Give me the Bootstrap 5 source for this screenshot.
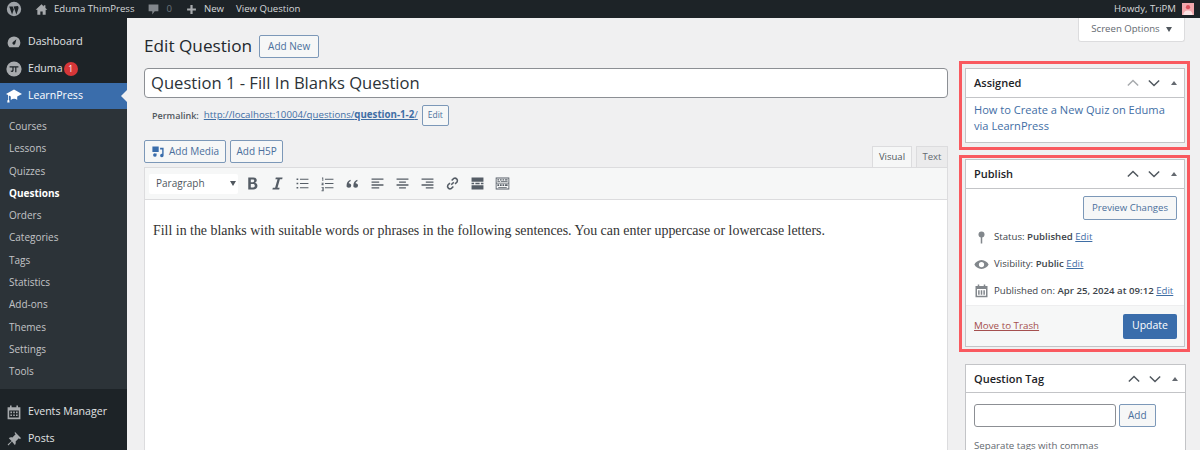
<!DOCTYPE html>
<html lang="en"><head><meta charset="utf-8"><title>Edit Question</title>
<link href="https://cdn.jsdelivr.net/npm/bootstrap@5.3.0/dist/css/bootstrap.min.css" rel="stylesheet">
<style>
html,body{height:450px;overflow:hidden}
body{font-family:"Open Sans","Noto Sans",sans-serif;font-size:10.5px;background:#f0f0f1;color:#3c434a}
a{color:#3f6ea5}
.adminbar{height:18px;background:#1d2327;color:#d5d8da;font-size:9.6px;line-height:18px;padding:0 6px}
.adminbar svg{display:block;flex:none}
.barhome{margin-left:13px}
.barsite{margin-left:6px}
.barcomment{margin-left:14px}
.barcount{margin-left:7px}
.barplus{margin-left:14px}
.barnew{margin-left:7px}
.barview{margin-left:12px}
.baravatar{margin-left:6px}
.shell{height:432px;overflow:hidden}
.sidemenu{width:127px;background:#1d2327;color:#e0e2e4;font-size:10.6px;flex:none}
.sideitem{height:27px;padding-left:6px;gap:6px}
.sideitem svg{width:16px;height:16px;flex:none;fill:#a7aaad}
.sideitem.first{margin-top:10px}
.sideitem.tall{height:28px}
.sideitem.current{background:#3a6dab;color:#fff;height:26px;position:relative}
.sideitem.current svg{fill:#fff}
.sideitem.current::after{content:"";position:absolute;right:0;top:7px;border:6px solid transparent;border-right-color:#f0f0f1;border-left:0}
.bubble{width:14px;height:14px;border-radius:50%;background:#d63638;color:#fff;font-size:8.5px;margin-left:-5px}
.submenu{background:#2c3338;color:#c3c4c7;font-size:10px;height:280px;padding:6px 0 0 9px;margin-bottom:9px}
.submenu div{height:22.3px;line-height:22.3px}
.maincol{width:804px;margin-left:17px;flex:none}
.sidecol{width:221px;margin-left:17px;flex:none}
.pagehead{height:30px;margin-top:13px;gap:7px}
.pagehead h1{font-size:17.2px;font-weight:400;margin:0;color:#23282d}
.wpbtn{border:1px solid #7c98b8;border-radius:2px;color:#4a6f9c;background:#f6f7f7;font-size:10px;padding:0 7px;height:23px;display:inline-flex;align-items:center;gap:4px}
.wpbtn.wide{padding:0 8px}
.wpbtn.mediabtn{padding:0 6px}
.wpbtn.h5pbtn{padding:0 5.500px}
.titlebox{height:30px;margin-top:7px;border:1px solid #8c8f94;border-radius:4px;background:#fff;font-size:16.6px;color:#2c3338;padding:0 6px;line-height:28px}
.permalink{margin:6px 0 0 8px;height:23px;font-size:9px;color:#50575e;gap:5px}
.permalink a{font-size:9.7px}
.wpbtn.tiny{font-size:8.5px;height:21px;padding:0 5px;margin-left:-1px}
.mediarow{margin-top:13px;height:27px;gap:4px}
.edittab{height:21px;margin-top:6px;width:40px;font-size:9.5px;background:#f6f7f7;border:1px solid #dcdcde;border-bottom:0;color:#50575e}
.edittab.alt{background:#ebebec;width:32px;color:#646970}
.editorbox{background:#fff;border:1px solid #dcdcde;height:290px}
.toolbar{height:32px;background:#f6f7f7;border-bottom:1px solid #dcdcde;padding-left:4px;gap:8px}
.formatsel{width:89px;height:20px;background:#fff;border-radius:2px;font-size:10px;color:#50575e;padding:0 2px 0 7px;margin-right:-2.500px}
.toolbar svg{width:17px;height:17px;flex:none;fill:#555d66}
.editortext{font-family:"Liberation Serif",serif;font-size:13.9px;color:#333;padding:21px 8px}
.optionsbtn{width:107px;height:24px;margin-left:auto;margin-right:1px;background:#fff;border:1px solid #dcdcde;border-top:0;border-radius:0 0 3px 3px;font-size:9.6px;color:#646970;gap:6px}
.tri{width:0;height:0;border:3.500px solid transparent;border-top:5px solid #50575e;border-bottom:0}
.framed{border:3px solid #f9595f;margin:0 -4px 0 -6px;padding:1px 2px 2px 3px}
.framed.one{margin-top:19px;height:89px;padding-top:4px;padding-bottom:4px}
.framed.two{margin-top:5px;height:197px}
.metabox{background:#fff;border:1px solid #c3c4c7}
.framed .metabox{height:100%}
.boxhead{height:29px;flex:none;border-bottom:1px solid #c3c4c7;padding:0 7px 0 8px;font-size:11px;color:#1d2327}
.boxhead svg{width:12px;height:12px;stroke:#50575e;fill:none;stroke-width:1.700;margin-left:9px}
.boxhead .dim{stroke:#a7aaad}
.boxhead .up{width:0;height:0;border:3.500px solid transparent;border-bottom:4.500px solid #646970;border-top:0;margin-left:11px}
.assignedlink{font-size:11.100px;line-height:16px;padding:4px 8px;color:#3f6ea5;font-weight:500}
.previewrow{padding:7px 7px 0;justify-content:flex-end}
.wpbtn.pv{height:24px;padding:0 8px;font-size:9.600px}
.pubrow{height:26.700px;padding-left:8px;font-size:9.630px;gap:5px;white-space:nowrap}
.pubrow svg{width:15px;height:15px;fill:#82878c;flex:none}
.pubrow b{font-weight:600}
.pubfoot{margin-top:auto;height:41px;flex:none;background:#f6f7f7;border-top:1px solid #eeeeef;padding:0 7px 0 8px;font-size:9.800px}
.pubfoot a{color:#a5504f}
.updatebtn{background:#3a6dab;color:#fff;border-radius:2px;width:54px;height:25px;font-size:10.500px}
.tagbox{margin-top:12px;height:96px}
.tagbox .boxhead{height:28px;padding-top:1px}
.tagbody{padding:11px 8px 0}
.tagrow{gap:3px}
.taginput{width:142px;height:23px;border:1px solid #8c8f94;border-radius:3px;background:#fff}
.tagnote{font-size:9.700px;color:#646970;margin-top:12px}
</style></head><body>
<header class="adminbar d-flex align-items-center">
  <svg width="16" height="16" viewBox="0 0 20 20"><circle cx="10" cy="10" r="9" fill="#9ea3a8"/><path d="M4 7l3.600 10 2.200-6.400L8.400 7zm5.400 0l3.600 10 2.400-7c.5-1.600.2-3-.6-3.800z" fill="#1d2327"/></svg>
  <svg class="barhome" width="13" height="13" viewBox="0 0 20 20"><path d="M10 2L1 10.500h2.600V18h4.600v-5h3.600v5h4.600v-7.500H19L16 7.700V3.500h-2.500v1.900z" fill="#a7aaad"/></svg>
  <span class="barsite">Eduma ThimPress</span>
  <svg class="barcomment" width="11" height="13" viewBox="0 0 18 20"><path d="M1 2h16v11h-6l-4 5v-5H1z" fill="#82878c"/></svg>
  <span class="barcount text-secondary">0</span>
  <svg class="barplus" width="11" height="11" viewBox="0 0 20 20"><path d="M8 2h4v6h6v4h-6v6H8v-6H2V8h6z" fill="#a7aaad"/></svg>
  <span class="barnew">New</span>
  <span class="barview">View Question</span>
  <span class="ms-auto">Howdy, TriPM</span>
  <svg class="baravatar" width="12" height="12" viewBox="0 0 13 13"><rect width="13" height="13" fill="#f2a9ae"/><circle cx="6.500" cy="4.500" r="2.300" fill="#d9525e"/><path d="M1.500 13c0-3.500 2.500-5 5-5s5 1.500 5 5z" fill="#fbe3e4"/></svg>
</header>
<div class="shell d-flex">
  <nav class="sidemenu">
    <div class="sideitem first d-flex align-items-center"><svg viewBox="0 0 20 20"><path d="M10 3a8 8 0 0 0-8 8c0 2.200.9 4.200 2.300 5.600h11.400A8 8 0 0 0 18 11a8 8 0 0 0-8-8zm0 10.500a2 2 0 0 1-1.300-3.500L13 6.500l-1.300 5A2 2 0 0 1 10 13.500z"/></svg>Dashboard</div>
    <div class="sideitem tall d-flex align-items-center"><svg viewBox="0 0 20 20"><circle cx="10" cy="10" r="9.500"/><path d="M4.500 6.500h11V8H13v6h-1.500V8h-2v3.500C9.500 13.500 8 14 6 13.500V12c1 .3 2 .3 2-1V8H4.500z" fill="#1d2327"/></svg><span>Eduma</span><span class="bubble d-inline-flex align-items-center justify-content-center">1</span></div>
    <div class="sideitem current d-flex align-items-center"><svg viewBox="0 0 20 20"><path d="M10 2L0 7.500l2.500 1.300V15H2l-.5 3h3L4 15h-.5V9.400L6 10.700V15c2.500-2 6-2 8 0v-4.300l6-3.200z"/></svg>LearnPress</div>
    <div class="submenu">
      <div>Courses</div><div>Lessons</div><div>Quizzes</div><div class="fw-bold text-white">Questions</div><div>Orders</div><div>Categories</div><div>Tags</div><div>Statistics</div><div>Add-ons</div><div>Themes</div><div>Settings</div><div>Tools</div>
    </div>
    <div class="sideitem d-flex align-items-center"><svg viewBox="0 0 20 20"><path d="M2 4h3V2h2v2h6V2h2v2h3v15H2zm2 4v9h12V8zm1.500 1.500h2v2h-2zm3.500 0h2v2H9zm3.500 0h2v2h-2zm-7 3.500h2v2h-2zm3.500 0h2v2H9zm3.500 0h2v2h-2z"/></svg>Events Manager</div>
    <div class="sideitem d-flex align-items-center"><svg viewBox="0 0 20 20"><path d="M11 1l8 8-2 1-1-1-4 4c.5 2 0 3.500-1 4.500L7.500 13 3 18l-1-1 5-4.500L3.500 9C4.500 8 6 7.500 8 8l4-4-1-1z"/></svg>Posts</div>
  </nav>
  <main class="maincol">
    <div class="pagehead d-flex align-items-center"><h1>Edit Question</h1><span class="wpbtn wide">Add New</span></div>
    <div class="titlebox">Question 1 - Fill In Blanks Question</div>
    <div class="permalink d-flex align-items-center"><b class="fw-semibold">Permalink:</b><a href="#">http://localhost:10004/questions/<b>question-1-2</b>/</a><span class="wpbtn tiny">Edit</span></div>
    <div class="mediarow d-flex align-items-start">
      <span class="wpbtn mediabtn"><svg width="14" height="14" viewBox="0 0 20 20"><path d="M2 2h9v8H2zm11 2h5v11a2.500 2.500 0 1 1-2-2.400V6.500h-3zM8 12v2.500A2.500 2.500 0 1 1 6 12z" fill="#3a6dab"/></svg>Add Media</span>
      <span class="wpbtn h5pbtn">Add H5P</span>
      <span class="edittab d-flex align-items-center justify-content-center ms-auto">Visual</span>
      <span class="edittab alt d-flex align-items-center justify-content-center">Text</span>
    </div>
    <div class="editorbox">
      <div class="toolbar d-flex align-items-center">
        <div class="formatsel d-flex align-items-center justify-content-between">Paragraph<span class="tri"></span></div>
        <svg viewBox="0 0 20 20"><path d="M5 3h6c2.500 0 4 1.300 4 3.300 0 1.400-.8 2.400-2 2.900 1.700.4 2.800 1.700 2.800 3.500 0 2.600-1.900 4.300-4.800 4.300H5zm3 2.400v3h2.400c1 0 1.600-.6 1.600-1.500s-.6-1.500-1.600-1.500zm0 5.300v3.900h2.700c1.300 0 2-.8 2-2s-.8-1.900-2-1.900z"/></svg>
        <svg viewBox="0 0 20 20"><path d="M8 3h8l-.5 2h-2.700L10 15h2.500l-.5 2H4l.5-2h2.700L10 5H7.500z"/></svg>
        <svg viewBox="0 0 20 20"><path d="M3 4h2v2H3zm4 .300h10v1.400H7zM3 9h2v2H3zm4 .300h10v1.400H7zM3 14h2v2H3zm4 .300h10v1.400H7z"/></svg>
        <svg viewBox="0 0 20 20"><path d="M7 4.300h10v1.400H7zm0 5h10v1.400H7zm0 5h10v1.400H7zM3.500 3H5v4H4V4h-.5zM3 9h2.500v1L4 11h1.500v1H3v-1l1.500-1H3zm0 5h2.500v5H3v-1h1.500v-1H3.500v-1h1V15H3z"/></svg>
        <svg viewBox="0 0 20 20"><path d="M3 13c0-4 1.500-6.500 4.500-7.500L8 7c-1.500.7-2.300 1.600-2.400 2.700C7.200 9.700 8.500 10.800 8.500 12.300A2.700 2.700 0 0 1 5.800 15C4 15 3 14 3 13zm8 0c0-4 1.500-6.500 4.500-7.500L16 7c-1.500.7-2.300 1.600-2.400 2.700 1.600 0 2.900 1.100 2.900 2.600a2.700 2.700 0 0 1-2.700 2.700C12 15 11 14 11 13z"/></svg>
        <svg viewBox="0 0 20 20"><path d="M3 4h14v1.500H3zm0 3.500h9V9H3zM3 11h14v1.500H3zm0 3.500h9V16H3z"/></svg>
        <svg viewBox="0 0 20 20"><path d="M3 4h14v1.500H3zm3 3.500h8V9H6zM3 11h14v1.500H3zm3 3.500h8V16H6z"/></svg>
        <svg viewBox="0 0 20 20"><path d="M3 4h14v1.500H3zm5 3.500h9V9H8zM3 11h14v1.500H3zm5 3.500h9V16H8z"/></svg>
        <svg viewBox="0 0 20 20"><path d="M8.500 11.500l3-3M7 9.500L4.500 12a3 3 0 0 0 4 4l2.500-2.500M13 10.500L15.500 8a3 3 0 0 0-4-4L9 6.500" fill="none" stroke="#555d66" stroke-width="1.800"/></svg>
        <svg viewBox="0 0 20 20"><path d="M3 3h14v5H3zm0 9h14v5H3zM3 9.200h3v1.600H3zm4.500 0h5v1.600h-5zm6.500 0h3v1.600h-3z"/></svg>
        <svg viewBox="0 0 20 20"><path d="M2 3h16v14H2zm1 1v5h14V4zm0 6v6h14v-6zm1-5h2v1.500H4zm3 0h2v1.500H7zm3 0h2v1.500h-2zm3 0h3v1.500h-3zM4 7h3v1H4zm4 0h8v1H8zm-4 4h2v2H4zm3 0h2v2H7zm3 0h2v2h-2zm3 0h3v2h-3zm-8 3h10v1H5z"/></svg>
      </div>
      <div class="editortext">Fill in the blanks with suitable words or phrases in the following sentences. You can enter uppercase or lowercase letters.</div>
    </div>
  </main>
  <aside class="sidecol">
    <div class="optionsbtn d-flex align-items-center justify-content-center">Screen Options<span class="tri"></span></div>
    <div class="framed one">
      <div class="metabox">
        <div class="boxhead d-flex align-items-center"><span class="fw-semibold me-auto">Assigned</span><svg class="dim" viewBox="0 0 14 14"><path d="M1 10l6-6 6 6"/></svg><svg viewBox="0 0 14 14"><path d="M1 4l6 6 6-6"/></svg><span class="up"></span></div>
        <div class="assignedlink">How to Create a New Quiz on Eduma via LearnPress</div>
      </div>
    </div>
    <div class="framed two">
      <div class="metabox d-flex flex-column">
        <div class="boxhead d-flex align-items-center"><span class="fw-semibold me-auto">Publish</span><svg viewBox="0 0 14 14"><path d="M1 10l6-6 6 6"/></svg><svg viewBox="0 0 14 14"><path d="M1 4l6 6 6-6"/></svg><span class="up"></span></div>
        <div class="previewrow d-flex"><span class="wpbtn pv">Preview Changes</span></div>
        <div class="pubrow d-flex align-items-center mt-1"><svg viewBox="0 0 20 20"><circle cx="10" cy="6" r="4"/><rect x="9" y="9" width="2" height="9"/></svg><span>Status: <b>Published</b> <a href="#">Edit</a></span></div>
        <div class="pubrow d-flex align-items-center"><svg viewBox="0 0 20 20"><path d="M10 4c4.500 0 8 3 9.500 6-1.500 3-5 6-9.500 6S2 13 .5 10C2 7 5.500 4 10 4zm0 2.500a3.500 3.500 0 1 0 0 7 3.500 3.500 0 0 0 0-7z"/></svg><span>Visibility: <b>Public</b> <a href="#">Edit</a></span></div>
        <div class="pubrow d-flex align-items-center"><svg viewBox="0 0 20 20"><path d="M2 4h3V2h2v2h6V2h2v2h3v15H2zm2 4v9h12V8zm1.500 1.500h2v6h-2zm3.500 0h2v6H9zm3.500 0h2v6h-2z"/></svg><span>Published on: <b>Apr 25, 2024 at 09:12</b> <a href="#">Edit</a></span></div>
        <div class="pubfoot d-flex align-items-center justify-content-between"><a href="#">Move to Trash</a><span class="updatebtn d-flex align-items-center justify-content-center">Update</span></div>
      </div>
    </div>
    <div class="metabox tagbox">
      <div class="boxhead d-flex align-items-center"><span class="fw-semibold me-auto">Question Tag</span><svg viewBox="0 0 14 14"><path d="M1 10l6-6 6 6"/></svg><svg viewBox="0 0 14 14"><path d="M1 4l6 6 6-6"/></svg><span class="up"></span></div>
      <div class="tagbody"><div class="tagrow d-flex"><div class="taginput"></div><span class="wpbtn wide">Add</span></div><div class="tagnote">Separate tags with commas</div></div>
    </div>
  </aside>
</div>
<script src="https://cdn.jsdelivr.net/npm/bootstrap@5.3.0/dist/js/bootstrap.bundle.min.js"></script>
</body></html>
